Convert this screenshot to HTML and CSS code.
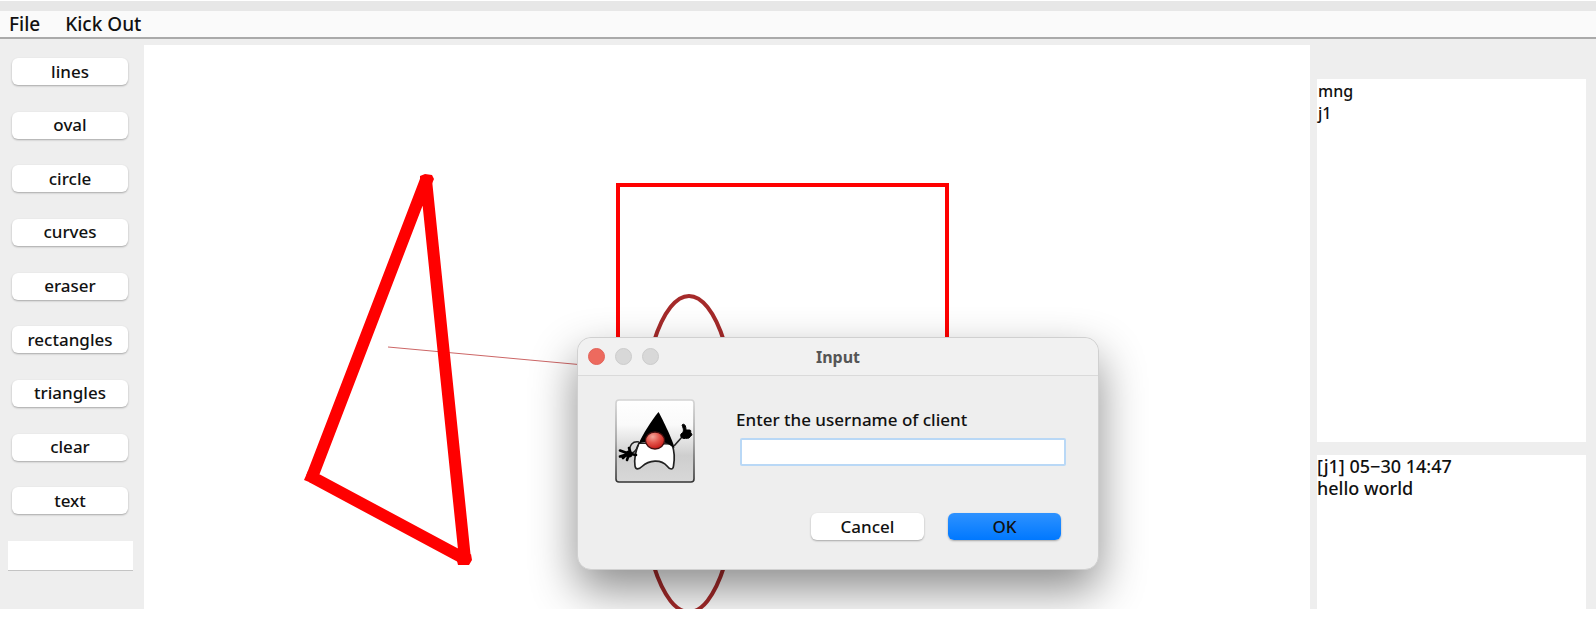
FILE: index.html
```html
<!DOCTYPE html>
<html lang="en">
<head>
<meta charset="utf-8">
<title>Whiteboard</title>
<link rel="stylesheet" href="styles.css">
</head>
<body>
<div class="window">
  <nav class="menubar">
    <button type="button" class="menu">File</button>
    <button type="button" class="menu">Kick Out</button>
  </nav>
  <div class="workspace">
    <aside class="tools">
      <button type="button" class="btn">lines</button>
      <button type="button" class="btn">oval</button>
      <button type="button" class="btn">circle</button>
      <button type="button" class="btn">curves</button>
      <button type="button" class="btn">eraser</button>
      <button type="button" class="btn">rectangles</button>
      <button type="button" class="btn">triangles</button>
      <button type="button" class="btn">clear</button>
      <button type="button" class="btn">text</button>
      <input type="text" class="tool-text" aria-label="Text to draw">
    </aside>
    <main class="board">
      <svg class="drawing" aria-hidden="true">
        <g fill="none">
          <rect x="474" y="140" width="329" height="300" stroke="#f00" stroke-width="4"/>
          <ellipse cx="545" cy="409" rx="50" ry="158" stroke="#a52a2a" stroke-width="4"/>
          <path d="M244 302 440 320" stroke="#c66" stroke-width="1"/>
          <path d="M282 135 168 432 321 514Z" stroke="#f00" stroke-width="12" stroke-linejoin="bevel"/>
          <path d="M276 131 281 129 288 130 290 134 287 141 276 141ZM160 435 164 426 175 428 170 439ZM313 516 327 509 328 515 325 520 314 520Z" fill="#f00"/>
        </g>
      </svg>
      <section class="dialog" role="dialog" aria-labelledby="dialog-title">
        <header class="titlebar">
          <div class="lights">
            <button type="button" class="light close" aria-label="Close"></button>
            <button type="button" class="light" aria-label="Minimize"></button>
            <button type="button" class="light" aria-label="Zoom"></button>
          </div>
          <h1 id="dialog-title" class="title">Input</h1>
        </header>
        <form class="form">
          <div class="prompt">
            <svg class="duke" viewBox="0 0 80 84" aria-hidden="true">
              <defs>
                <linearGradient id="tile" x1="0" y1="0" x2="0" y2="1">
                  <stop offset="0" stop-color="#fff"/>
                  <stop offset=".3" stop-color="#fafafa"/>
                  <stop offset=".68" stop-color="#cecece"/>
                  <stop offset="1" stop-color="#d8d8d8"/>
                </linearGradient>
                <linearGradient id="edge" x1="0" y1="0" x2="0" y2="1">
                  <stop offset="0" stop-color="#d4d4d4"/>
                  <stop offset=".5" stop-color="#999"/>
                  <stop offset="1" stop-color="#333"/>
                </linearGradient>
                <radialGradient id="nose" cx=".38" cy=".28" r=".7">
                  <stop offset="0" stop-color="#f5a79b"/>
                  <stop offset=".5" stop-color="#e4584e"/>
                  <stop offset="1" stop-color="#c8201c"/>
                </radialGradient>
              </defs>
              <rect x="1" y="1" width="78" height="82" rx="3" fill="url(#tile)" stroke="url(#edge)" stroke-width="1.6"/>
              <path d="M24 44C21 51 19 60 20 67C20.500 71 24 70.500 27 67.500C34 61 46 60 52 67C55 71 58 71 58.500 67C60 59 59 51 57 45Z" fill="#fff" stroke="#222" stroke-width="1.700" stroke-linejoin="round"/>
              <path d="M43.500 13C45 15 58.500 42 59.500 49L56 47C51 41 29 41 23.500 45C28 35 36 22 43.500 13Z" fill="#000"/>
              <ellipse cx="40" cy="41.500" rx="9.500" ry="8.500" fill="url(#nose)" stroke="#451010" stroke-width="1.300"/>
              <path d="M24 43C17 42 15 46 14 53M23 46C22 50 20 53 17 54" fill="none" stroke="#222" stroke-width="1.500"/>
              <path d="M21 56 11 54M12 54 5 51.500M13 55 5 57.500M14 55 12 61M12 55 8 59M15 52 14 49" stroke="#000" stroke-width="2.600" stroke-linecap="round"/>
              <circle cx="14" cy="55" r="3.500" fill="#000"/>
              <path d="M59 47 67 38" stroke="#222" stroke-width="1.600"/>
              <path d="M67 26C69 24 71 26 71 31L74 31C77 31 75 33 76 34C78 36 76 37 75 38C74 40 71 39 69 39.500C66 39 65 37 66 35C69 33 69 31 67 26Z" fill="#000" stroke="#000"/>
            </svg>
            <div class="field">
              <label for="username">Enter the username of client</label>
              <input type="text" id="username" class="username">
            </div>
          </div>
          <div class="actions">
            <button type="button" class="btn">Cancel</button>
            <button type="button" class="btn primary">OK</button>
          </div>
        </form>
      </section>
    </main>
    <aside class="side">
      <ul class="users">
        <li>mng</li>
        <li>j1</li>
      </ul>
      <div class="chat">
        <p>[j1] 05−30 14:47</p>
        <p>hello world</p>
      </div>
    </aside>
  </div>
</div>
</body>
</html>
```
FILE: styles.css
```css
* {
  box-sizing: border-box;
}

body {
  margin: 0;
  background: #fff;
  color: #111;
  font: 500 17px/22px "Noto Sans", "Open Sans", sans-serif;
}

button,
input {
  font: inherit;
  color: inherit;
}

.window {
  display: flex;
  flex-direction: column;
  height: 100vh;
  padding: 1px 0 13px;
}

.menubar {
  display: flex;
  gap: 25px;
  padding: 0 9px;
  background: #fafafa;
  border-top: 10px solid #e7e7e7;
  border-bottom: 2px solid #aaa;
}

.menu {
  height: 26px;
  padding: 0;
  border: 0;
  background: none;
  font-size: 19px;
}

.workspace {
  display: grid;
  grid-template-columns: 144px 1fr 286px;
  flex: 1;
  min-height: 0;
  background: #eee;
}

.tools {
  display: flex;
  flex-direction: column;
  justify-content: space-between;
  padding: 19px 16px 38px 12px;
}

.btn {
  height: 27px;
  padding: 0;
  border: 0;
  border-radius: 6px;
  background: #fff;
  box-shadow: 0 1px 2px rgba(0, 0, 0, 0.3);
  line-height: 24px;
}

.tool-text {
  height: 30px;
  margin: 0 -5px 0 -4px;
  border: 0;
  border-bottom: 1px solid #c4c4c4;
  background: #fff;
}

.board {
  position: relative;
  margin-top: 6px;
  background: #fff;
  overflow: hidden;
}

.drawing {
  display: block;
  width: 100%;
  height: 100%;
}

.dialog {
  position: absolute;
  left: 433px;
  top: 292px;
  width: 522px;
  border: 1px solid #d0d0d0;
  border-radius: 14px;
  background: #eee;
  box-shadow: 0 20px 46px rgba(0, 0, 0, 0.45);
}

.titlebar {
  display: grid;
  grid-template-columns: 1fr auto 1fr;
  align-items: center;
  height: 38px;
  padding: 0 10px;
  border-bottom: 1px solid #dadada;
  border-radius: 14px 14px 0 0;
  background: #f1f1f1;
}

.lights {
  display: flex;
  gap: 10px;
}

.light {
  width: 17px;
  height: 17px;
  padding: 0;
  border: 1px solid #ccc;
  border-radius: 50%;
  background: #d8d8d8;
}

.close {
  border-color: #e2635a;
  background: #ed6a5e;
}

.title {
  margin: 0;
  color: #555;
  font-size: 16px;
  font-weight: 700;
}

.form {
  padding: 23px 37px 29px;
}

.prompt {
  display: flex;
  gap: 41px;
}

.duke {
  width: 80px;
  height: 84px;
}

.field {
  display: flex;
  flex: 1;
  flex-direction: column;
  gap: 7px;
  margin-right: -5px;
  padding-top: 10px;
}

.username {
  height: 28px;
  margin-left: 4px;
  border: 2px solid #b9d8f6;
  border-radius: 2px;
  background: #fff;
}

.actions {
  display: flex;
  justify-content: flex-end;
  gap: 24px;
  margin-top: 30px;
}

.actions .btn {
  width: 113px;
}

.btn.primary {
  background: linear-gradient(#2e92ff, #0078ff);
}

.side {
  display: flex;
  flex-direction: column;
  gap: 13px;
  padding: 40px 10px 0 7px;
}

.users,
.chat {
  margin: 0;
  background: #fff;
}

.users {
  flex: 362;
  padding: 1px;
  font-size: 16px;
  list-style: none;
}

.chat {
  flex: 155;
}

.chat p {
  margin: 0;
  font-size: 18px;
}
```
